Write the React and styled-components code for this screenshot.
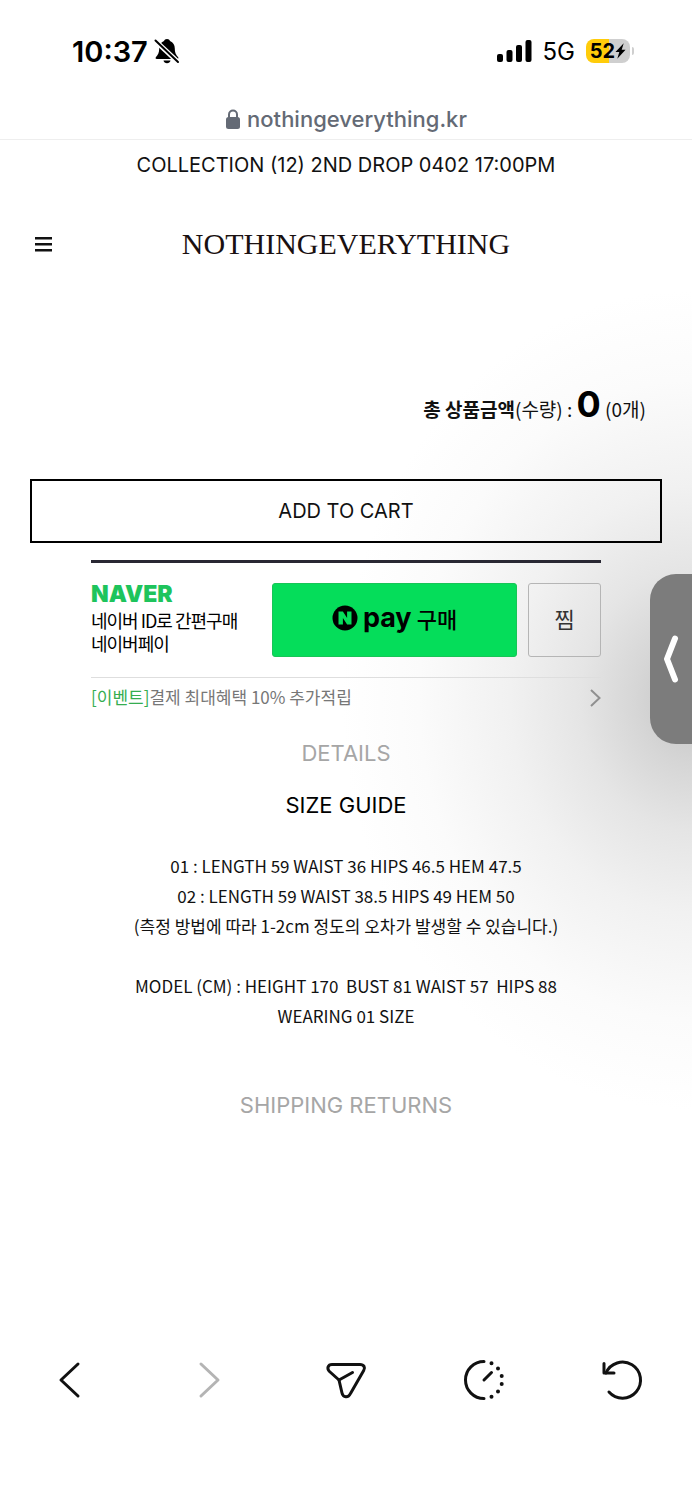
import React from "react";
import styled, { createGlobalStyle } from "styled-components";

const COLORS = {
  ink: "#111111",
  muted: "#a6a6a6",
  url: "#646a75",
  naver: "#1ec45c",
  pay: "#05dd5a",
};

const SANS = `Inter, "Noto Sans CJK KR", sans-serif`;
const KOREAN = `"Noto Sans CJK KR", sans-serif`;

const GlobalStyle = createGlobalStyle`
  * {
    box-sizing: border-box;
  }
  body {
    margin: 0;
    background: #fff;
    color: ${COLORS.ink};
    font-family: ${SANS};
  }
  button {
    font-family: inherit;
    color: inherit;
    background: none;
    border: 0;
    padding: 0;
    cursor: pointer;
  }
  a {
    color: inherit;
    text-decoration: none;
  }
  h2, p {
    margin: 0;
  }
  svg {
    display: block;
  }
`;

const Screen = styled.div`
  position: relative;
  min-height: 100vh;
  display: flex;
  flex-direction: column;
  overflow: hidden;
  background: radial-gradient(
    ellipse 350px 410px at 100% 700px,
    #c4c4c4 0%,
    #d6d6d6 16%,
    #e5e5e5 32%,
    #f1f1f1 52%,
    #fbfbfb 78%,
    #ffffff 100%
  );
`;

const StatusBar = styled.div`
  height: 102px;
  padding: 0 58px 0 72px;
  display: flex;
  align-items: center;
  justify-content: space-between;
`;

const StatusGroup = styled.div`
  display: flex;
  align-items: center;
  gap: ${(props) => props.gap}px;
`;

const Clock = styled.time`
  font-size: 29px;
  font-weight: 600;
  color: #000;
`;

const Network = styled.span`
  font-size: 24px;
  color: #000;
`;

const Battery = styled.div`
  display: flex;
  align-items: center;
  gap: 2px;
`;

const BatteryBody = styled.span`
  display: flex;
  align-items: center;
  justify-content: center;
  width: 44px;
  height: 24px;
  border-radius: 8px;
  font-size: 20px;
  font-weight: 700;
  color: #000;
  background: linear-gradient(90deg, #ffcc0a 52%, #cfcfcf 52%);
`;

const BatteryTip = styled.span`
  width: 2px;
  height: 8px;
  border-radius: 0 2px 2px 0;
  background: #cfcfcf;
`;

const AddressBar = styled.div`
  height: 38px;
  padding-bottom: 4px;
  display: flex;
  align-items: center;
  justify-content: center;
  gap: 6px;
  border-bottom: 1px solid #eeeeee;
  font-size: 22px;
  font-weight: 500;
  color: ${COLORS.url};
`;

const Notice = styled.p`
  line-height: 50px;
  text-align: center;
  font-size: 20px;
`;

const Header = styled.header`
  height: 108px;
  padding: 0 34px;
  display: grid;
  grid-template-columns: 20px 1fr 20px;
  align-items: center;
`;

const Logo = styled.a`
  justify-self: center;
  font-family: "Liberation Serif", serif;
  font-size: 30px;
  color: #1a1010;
  white-space: nowrap;
`;

const Total = styled.p`
  padding: 78px 46px 42px;
  line-height: 56px;
  text-align: right;
  font-family: ${KOREAN};
  font-size: 19px;
`;

const TotalPrice = styled.strong`
  font-family: ${SANS};
  font-size: 36px;
  font-weight: 700;
  color: #000;
`;

const CartButton = styled.button`
  height: 64px;
  margin: 0 30px;
  border: 2px solid #000;
  font-size: 20px;
`;

const NaverPay = styled.section`
  margin: 17px 91px 0;
  border-top: 3px solid #292833;
  font-family: ${KOREAN};
`;

const PayRow = styled.div`
  padding: 20px 0;
  display: flex;
  gap: 11px;
  border-bottom: 1px solid #dedede;
`;

const PayIntro = styled.div`
  flex: 1;
  font-size: 18px;
  line-height: 23px;
  letter-spacing: -1px;
  color: #000;
`;

const NaverMark = styled.strong`
  display: block;
  margin-bottom: 4px;
  font-family: ${SANS};
  font-size: 23px;
  font-weight: 900;
  letter-spacing: 0;
  line-height: 22px;
  color: ${COLORS.naver};
`;

const PayButton = styled.button`
  width: 245px;
  height: 74px;
  padding-bottom: 4px;
  display: flex;
  align-items: center;
  justify-content: center;
  gap: 5px;
  border: 1px solid #18c557;
  border-radius: 3px;
  background: ${COLORS.pay};
  font-size: 22px;
  font-weight: 500;
  color: #000;
`;

const PayWord = styled.span`
  font-family: ${SANS};
  font-size: 27px;
  line-height: 30px;
  font-weight: 700;
`;

const WishButton = styled.button`
  width: 73px;
  height: 74px;
  padding-bottom: 4px;
  border: 1px solid #b5b5b5;
  border-radius: 3px;
  font-size: 22px;
  color: #333;
`;

const EventLink = styled.a`
  display: flex;
  align-items: center;
  justify-content: space-between;
  height: 40px;
  font-size: 17px;
  color: #777;
`;

const EventText = styled.span`
  padding-bottom: 4px;
`;

const EventTag = styled.span`
  color: #35ad50;
`;

const SectionTitle = styled.h2`
  line-height: 52px;
  text-align: center;
  font-size: 22px;
  font-weight: 400;
  color: ${(props) => (props.active ? "#000" : COLORS.muted)};
`;

const Tabs = styled.section`
  padding-top: 9px;
`;

const SizeText = styled.p`
  padding: 20px 0 48px;
  text-align: center;
  white-space: pre-line;
  font-family: ${KOREAN};
  font-size: 17px;
  line-height: 30px;
`;

const PanelHandle = styled.button`
  position: absolute;
  top: 574px;
  right: 0;
  width: 42px;
  height: 170px;
  display: flex;
  align-items: center;
  justify-content: center;
  border-radius: 26px 0 0 26px;
  background: #7c7c7c;
`;

const Toolbar = styled.nav`
  margin-top: auto;
  padding-bottom: 96px;
  display: grid;
  grid-template-columns: repeat(5, 1fr);
`;

const ToolButton = styled.button`
  height: 48px;
  display: flex;
  align-items: center;
  justify-content: center;
  color: ${(props) => (props.disabled ? "#b4b4b4" : "#111")};
`;

const BellOff = () => (
  <svg width="26" height="28" viewBox="0 0 26 28" fill="none">
    <path d="M13 2c-1.600 0-2.600.8-3 2-3.200 1.200-4.800 4-4.800 7.500 0 4.500-1.400 6.400-3.200 8.500-.8 1-.4 2 .8 2h20.400c1.200 0 1.600-1 .8-2-1.800-2.100-3.200-4-3.200-8.500 0-3.500-1.600-6.300-4.800-7.500-.4-1.200-1.400-2-3-2z" fill="#000" />
    <path d="M9.500 23.500h7c-.4 1.700-1.700 2.800-3.500 2.800s-3.100-1.100-3.500-2.800z" fill="#000" />
    <path d="M1 3.500l23.500 22" stroke="#fff" strokeWidth="5" />
    <path d="M1.500 3.500l22.500 21.500" stroke="#000" strokeWidth="2" strokeLinecap="round" />
  </svg>
);

const Signal = () => (
  <svg width="35" height="22" viewBox="0 0 35 22" fill="#000">
    <rect x="0" y="14" width="6" height="8" rx="2" />
    <rect x="9.500" y="10" width="6" height="12" rx="2" />
    <rect x="19" y="5" width="6" height="17" rx="2" />
    <rect x="28.500" y="0" width="6" height="22" rx="2" />
  </svg>
);

const Bolt = () => (
  <svg width="11" height="16" viewBox="0 0 12 17" fill="#000">
    <path d="M9.500 0L.5 9.500h4.200L2.500 17 11.500 7.200H7.300z" />
  </svg>
);

const Lock = () => (
  <svg width="16" height="20" viewBox="0 0 16 20" fill="none">
    <rect x="1" y="8" width="14" height="12" rx="2.500" fill="currentColor" />
    <path d="M4 9V5.500a4 4 0 018 0V9" stroke="currentColor" strokeWidth="2" />
  </svg>
);

const Burger = () => (
  <svg width="18" height="15" viewBox="0 0 18 15" fill="#111">
    <path d="M1 0h17v2.500H1zM1 6h17v2.500H1zM1 12h17v2.500H1z" />
  </svg>
);

const NBadge = () => (
  <svg width="26" height="26" viewBox="0 0 26 26">
    <circle cx="13" cy="13" r="12.500" fill="#000" />
    <path d="M6.500 19.500v-13h4.400l4.200 6.400V6.500h4.400v13h-4.400l-4.200-6.400v6.400z" fill={COLORS.pay} />
  </svg>
);

const EventArrow = () => (
  <svg width="11" height="18" viewBox="0 0 11 18" fill="none" stroke="#909090" strokeWidth="2">
    <path d="M1 1l8.500 8L1 17" />
  </svg>
);

const HandleArrow = () => (
  <svg width="16" height="48" viewBox="0 0 16 48" fill="none" stroke="#fff" strokeWidth="6" strokeLinecap="round" strokeLinejoin="round">
    <path d="M12 3.500L4 24l8 20.500" />
  </svg>
);

const ToolIcon = ({ children }) => (
  <svg width="44" height="44" viewBox="0 0 44 44" fill="none" stroke="currentColor" strokeWidth="3" strokeLinecap="round" strokeLinejoin="round">
    {children}
  </svg>
);

const TOOLS = [
  {
    label: "Back",
    icon: <path d="M31 6L14 22l17 16" />,
  },
  {
    label: "Forward",
    disabled: true,
    icon: <path d="M15 6l17 16-17 16" />,
  },
  {
    label: "Discover",
    icon: (
      <>
        <path d="M8 6.500h28c4 0 5.500 3 3.700 6L26.500 35.500c-2.200 4.800-7.500 4.200-8.500-.5L15 22 5.500 13.500C2.500 10.500 4 6.500 8 6.500z" />
        <path d="M15 22l13.500-7.500" />
      </>
    ),
  },
  {
    label: "History",
    icon: (
      <>
        <path d="M22 3.500a18.500 18.500 0 000 37M22 22l7.500-7.500" />
        <path d="M29.500 5.200v.01M36 10.400v.01M39.700 18v.01M39.700 26v.01M36 33.500v.01M29.500 38.800v.01" strokeWidth="4" />
      </>
    ),
  },
  {
    label: "Reload",
    icon: (
      <>
        <path d="M8 34a18 18 0 10-3-19" />
        <path d="M3 5.500v9.500h10" />
      </>
    ),
  },
];

const SIZE_TEXT = `01 : LENGTH 59 WAIST 36 HIPS 46.5 HEM 47.5
02 : LENGTH 59 WAIST 38.5 HIPS 49 HEM 50
(측정 방법에 따라 1-2cm 정도의 오차가 발생할 수 있습니다.)

MODEL (CM) : HEIGHT 170 \u00a0BUST 81 WAIST 57 \u00a0HIPS 88
WEARING 01 SIZE`;

const App = () => {
  return (
    <>
      <GlobalStyle />
      <Screen>
        <StatusBar>
          <StatusGroup gap={6}>
            <Clock>10:37</Clock>
            <BellOff />
          </StatusGroup>
          <StatusGroup gap={11}>
            <Signal />
            <Network>5G</Network>
            <Battery>
              <BatteryBody>52<Bolt /></BatteryBody>
              <BatteryTip />
            </Battery>
          </StatusGroup>
        </StatusBar>
        <AddressBar>
          <Lock />
          <span>nothingeverything.kr</span>
        </AddressBar>

        <Notice>COLLECTION (12) 2ND DROP 0402 17:00PM</Notice>
        <Header>
          <button aria-label="Menu"><Burger /></button>
          <Logo href="/">NOTHINGEVERYTHING</Logo>
        </Header>

        <Total>
          <strong>총 상품금액</strong>(수량) : <TotalPrice>0</TotalPrice> (0개)
        </Total>
        <CartButton>ADD TO CART</CartButton>

        <NaverPay>
          <PayRow>
            <PayIntro>
              <NaverMark>NAVER</NaverMark>
              네이버 ID로 간편구매<br />
              네이버페이
            </PayIntro>
            <PayButton>
              <NBadge />
              <PayWord>pay</PayWord>
              구매
            </PayButton>
            <WishButton>찜</WishButton>
          </PayRow>
          <EventLink href="#event">
            <EventText><EventTag>[이벤트]</EventTag>결제 최대혜택 10% 추가적립</EventText>
            <EventArrow />
          </EventLink>
        </NaverPay>

        <Tabs>
          <SectionTitle>DETAILS</SectionTitle>
          <SectionTitle active>SIZE GUIDE</SectionTitle>
          <SizeText>{SIZE_TEXT}</SizeText>
          <SectionTitle>SHIPPING RETURNS</SectionTitle>
        </Tabs>

        <Toolbar>
          {TOOLS.map((tool) => (
            <ToolButton key={tool.label} aria-label={tool.label} disabled={tool.disabled}>
              <ToolIcon>{tool.icon}</ToolIcon>
            </ToolButton>
          ))}
        </Toolbar>

        <PanelHandle aria-label="Open panel">
          <HandleArrow />
        </PanelHandle>
      </Screen>
    </>
  );
};

export default App;
